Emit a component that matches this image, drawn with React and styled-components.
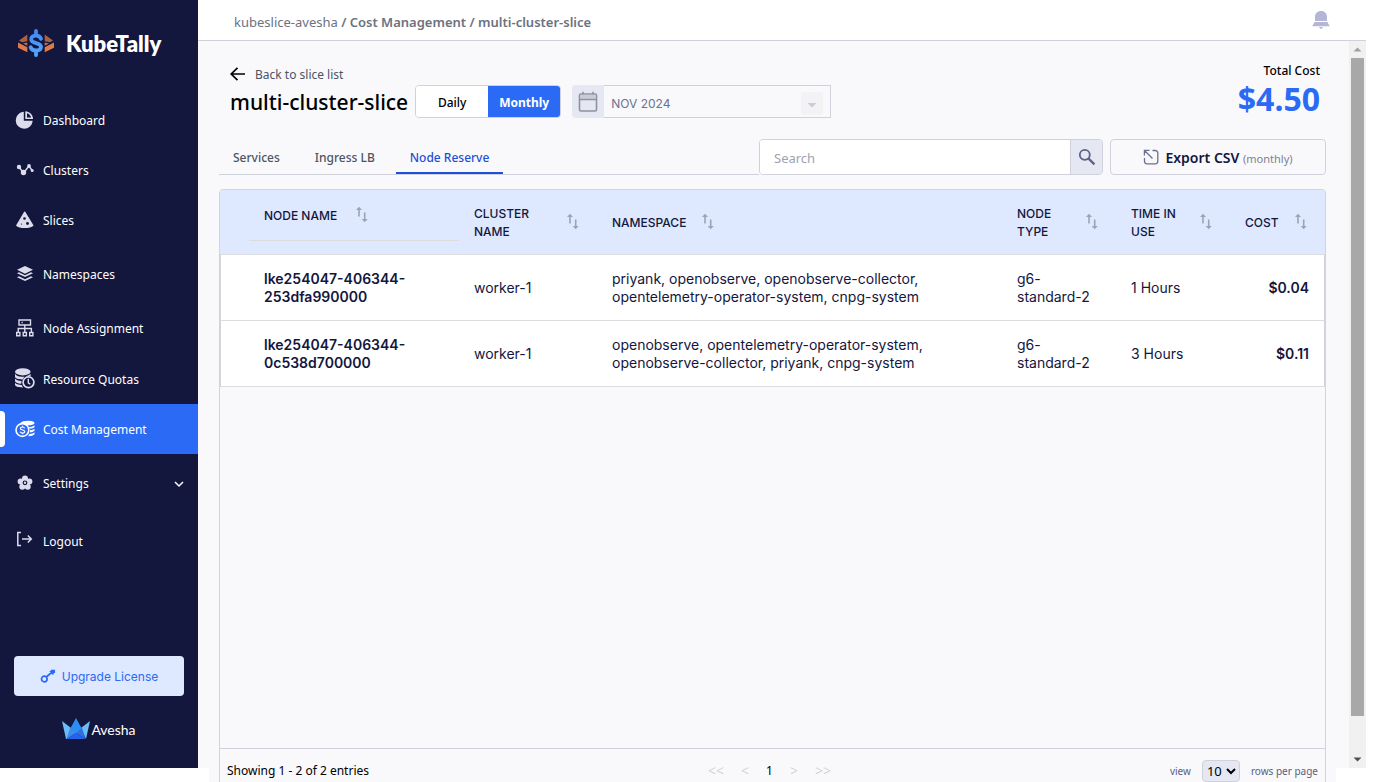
import React, { useState } from 'react';
import styled, { createGlobalStyle } from 'styled-components';

const GlobalStyle = createGlobalStyle`
    * {
        box-sizing: border-box;
    }

    html, body, #root {
        height: 100%;
    }

    body {
        margin: 0;
        overflow: hidden;
        background-color: #fff;
        font-family: 'Noto Sans', 'Open Sans', sans-serif;
        font-size: 12px;
        color: #000;
    }

    button, input, select {
        font-family: inherit;
        margin: 0;
    }

    svg {
        display: block;
        flex-shrink: 0;
    }
`;

const Shell = styled.div`
    display: flex;
    height: calc(100vh - 14px);
    margin-right: 9px;
`;

const Sidebar = styled.aside`
    display: flex;
    flex-direction: column;
    width: 198px;
    flex-shrink: 0;
    background-color: #13163d;
    color: #fff;
`;

const Brand = styled.div`
    display: flex;
    align-items: center;
    gap: 11px;
    height: 95px;
    padding: 0 0 9px 17px;
    font-family: Lato, sans-serif;
    font-size: 22px;
    font-weight: 800;
`;

const NavList = styled.nav`
    display: flex;
    flex-direction: column;
    flex: 1;
`;

const NavItem = styled.a`
    position: relative;
    display: flex;
    align-items: center;
    gap: 8px;
    padding: ${(p) => (p.$tall ? '19px' : '15px')} 14px ${(p) => (p.$tall ? '19px' : '15px')} 15px;
    line-height: 18px;
    color: #fff;
    text-decoration: none;
    background-color: ${(p) => (p.$active ? '#2a6af5' : 'transparent')};

    .label {
        flex: 1;
        padding-top: 2px;
    }

    &::before {
        content: '';
        display: ${(p) => (p.$active ? 'block' : 'none')};
        position: absolute;
        left: 0;
        top: 7px;
        bottom: 7px;
        width: 5px;
        border-radius: 0 4px 4px 0;
        background-color: #fff;
    }
`;

const UpgradeButton = styled.button`
    display: flex;
    align-items: center;
    justify-content: center;
    gap: 6px;
    height: 40px;
    margin: 0 14px;
    border: none;
    border-radius: 4px;
    background-color: #dee8ff;
    color: #2a6af5;
    font-family: Inter, sans-serif;
    font-size: 12px;
    cursor: pointer;
`;

const Company = styled.div`
    display: flex;
    align-items: center;
    justify-content: center;
    height: 72px;
    padding-bottom: 6px;
    font-family: Lato, sans-serif;
    font-size: 14px;
`;

const Main = styled.main`
    display: flex;
    flex-direction: column;
    flex: 1;
    min-width: 0;
`;

const TopBar = styled.header`
    display: flex;
    align-items: center;
    justify-content: space-between;
    height: 41px;
    flex-shrink: 0;
    padding: 0 36px;
    border-bottom: 1px solid #d1d1db;
    background-color: #fff;
`;

const Breadcrumb = styled.nav`
    padding-top: 4px;
    font-size: 13px;
    font-weight: 600;
    color: #6b7280;

    a {
        color: inherit;
        text-decoration: none;
    }

    a:first-child {
        font-weight: 400;
    }
`;

const IconButton = styled.button`
    display: flex;
    padding: 0;
    border: none;
    background: none;
    cursor: pointer;
`;

const Body = styled.div`
    display: flex;
    flex: 1;
    min-height: 0;
    background-color: #f9f9fb;
`;

const Content = styled.div`
    display: flex;
    flex-direction: column;
    flex: 1;
    min-width: 0;
    height: calc(100% + 25px);
    margin: 0 13px 0 11px;
    padding: 0 10px;
    background-color: #f9f9fb;
`;

const ScrollTrack = styled.div`
    display: flex;
    flex-direction: column;
    align-items: center;
    width: 17px;
    background-color: #f1f1f1;

    svg {
        height: 17px;
    }

    .rail {
        flex: 1;
    }

    .thumb {
        width: 13px;
        height: 95%;
        background-color: #a8a8a8;
    }
`;

const PageHeader = styled.div`
    display: flex;
    justify-content: space-between;
    align-items: flex-end;
    height: 77px;
    padding: 0 6px 0 11px;
`;

const TitleRow = styled.div`
    display: flex;
    align-items: flex-end;
    gap: 7px;

    h1 {
        margin: 0;
        font-size: 21px;
        line-height: 32px;
        font-weight: 500;
    }
`;

const Filters = styled.div`
    display: flex;
    gap: 11px;
`;

const BackLink = styled.a`
    display: flex;
    align-items: center;
    gap: 10px;
    height: 24px;
    color: #4b5563;
    font-size: 12px;
    text-decoration: none;
`;

const Toggle = styled.div`
    display: flex;
    height: 33px;
    border: 1px solid #d1d1db;
    border-radius: 4px;
    overflow: hidden;
`;

const ToggleButton = styled.button`
    width: 72px;
    padding: 2px 0 0;
    border: none;
    font-size: 12px;
    font-weight: ${(p) => (p.$active ? 700 : 500)};
    color: ${(p) => (p.$active ? '#fff' : '#000')};
    background-color: ${(p) => (p.$active ? '#2a6af5' : '#fff')};
    cursor: pointer;
`;

const DatePicker = styled.div`
    position: relative;
    display: flex;
    height: 33px;

    .calendar {
        display: flex;
        align-items: center;
        justify-content: center;
        width: 32px;
        border-radius: 4px 0 0 4px;
        background-color: #e5e7f3;
    }

    select {
        width: 227px;
        padding: 4px 7px 0;
        border: 1px solid #d1d1db;
        border-left: none;
        border-radius: 0;
        background-color: #f9f9fb;
        color: #6b7194;
        font-family: Inter, sans-serif;
        font-size: 12px;
        appearance: none;
    }

    .arrow {
        position: absolute;
        right: 8px;
        top: 7px;
        border-radius: 3px;
        background-color: #f3f3f6;
        pointer-events: none;
    }
`;

const Total = styled.div`
    display: flex;
    flex-direction: column;
    align-items: flex-end;
    font-size: 12px;
    font-weight: 500;
    line-height: 18px;

    strong {
        font-size: 32px;
        line-height: 38px;
        font-weight: 700;
        color: #2a6af5;
    }
`;

const Toolbar = styled.div`
    display: flex;
    height: 36px;
    margin: 21px 0 14px;
`;

const Tabs = styled.div`
    display: flex;
    flex: 1;
    gap: 7px;
    border-bottom: 1px solid #d1d1db;
`;

const Tab = styled.button`
    padding: 4px 14px 0;
    border: none;
    border-bottom: 2px solid ${(p) => (p.$active ? '#1d4fd8' : 'transparent')};
    background: none;
    font-size: 12px;
    font-weight: 500;
    color: ${(p) => (p.$active ? '#1d4fd8' : '#4b5563')};
    cursor: pointer;
`;

const SearchBox = styled.form`
    display: flex;
    width: 344px;
    margin-right: 7px;
    border: 1px solid #d1d1db;
    border-radius: 4px;
    overflow: hidden;

    input {
        flex: 1;
        min-width: 0;
        padding: 2px 14px 0;
        border: none;
        outline: none;
        font-size: 13px;
    }

    input::placeholder {
        color: #9ca3af;
    }

    button {
        display: flex;
        align-items: center;
        justify-content: center;
        width: 32px;
        padding: 0;
        border: none;
        border-left: 1px solid #d1d1db;
        background-color: #e5e7f3;
    }
`;

const ExportButton = styled.button`
    display: flex;
    align-items: center;
    justify-content: center;
    gap: 6px;
    width: 216px;
    border: 1px solid #d1d1db;
    border-radius: 4px;
    background-color: #f9f9fb;
    color: #13163d;
    font-size: 14px;
    font-weight: 600;
    cursor: pointer;

    small {
        font-size: 11px;
        font-weight: 400;
        color: #7d8093;
    }
`;

const TableCard = styled.section`
    display: flex;
    flex-direction: column;
    flex: 1;
    border: 1px solid #d1d5db;
    border-radius: 4px;
    overflow: hidden;
`;

const Table = styled.table`
    width: 100%;
    table-layout: fixed;
    border-spacing: 0;
    font-family: Inter, sans-serif;
    color: #13163d;
    line-height: 18px;

    th, td {
        padding: 0 15px;
        border-bottom: 1px solid #dcdcdf;
        text-align: left;
    }

    th {
        height: 65px;
        background-color: #dee8ff;
        font-size: 12px;
        font-weight: 500;
    }

    th.name {
        padding: 0;
        vertical-align: top;
    }

    td {
        height: 66px;
        background-color: #fff;
        font-size: 14px;
        font-weight: 400;
    }

    td:first-child {
        border-left: 1px solid #d1d5db;
    }

    td:last-child {
        border-right: 1px solid #d1d5db;
        text-align: right;
    }

    td.strong {
        font-weight: 600;
    }
`;

const HeadCell = styled.div`
    display: flex;
    align-items: center;
    gap: 13px;

    span {
        padding-top: 2px;
    }
`;

const NameHead = styled(HeadCell)`
    height: 51px;
    padding: 0 15px;
    gap: 16px;
    border-bottom: 1px solid #dcdcdf;
`;

const Footer = styled.footer`
    display: flex;
    align-items: center;
    justify-content: space-between;
    height: 44px;
    margin-top: auto;
    padding: 0 7px;
    border-top: 1px solid #d1d1db;
    font-size: 12px;
`;

const Pager = styled.div`
    display: flex;
    align-items: center;
    gap: 17px;

    button {
        padding: 0;
        border: none;
        background: none;
        font-size: 12px;
        color: #000;
    }

    button:disabled {
        font-size: 14px;
        font-weight: 300;
        color: #c5c9d0;
    }
`;

const PageSize = styled.label`
    display: flex;
    align-items: center;
    gap: 11px;
    font-size: 10px;
    color: #5a5f82;

    .select {
        position: relative;
    }

    select {
        width: 38px;
        height: 22px;
        padding: 0 4px;
        border: 1px solid #d1d1db;
        border-radius: 4px;
        background-color: #e5e7f3;
        font-size: 13px;
        appearance: none;
    }

    svg {
        position: absolute;
        right: 4px;
        top: 5px;
        pointer-events: none;
    }
`;

const light = '#dcdcec';

const KubeTallyLogo = () => (
  <svg width="38" height="30" viewBox="0 0 38 30">
    <defs>
      <linearGradient id="dollar" gradientUnits="userSpaceOnUse" x1="0" y1="1" x2="0" y2="29">
        <stop offset="0" stopColor="#3f85f5" />
        <stop offset="1" stopColor="#55aaff" />
      </linearGradient>
    </defs>
    <path d="M10.300 6.500v6.800L5 14.200 2 12.600z M27.700 6.500v6.800l5.300.9 3-1.600z" fill="#a9613f" />
    <path d="M10.300 14.500v3.300L6 15.400z M27.700 14.500v3.300l4.300-2.400z" fill="#c96d45" />
    <path d="M1 14.500l9.300 4.800v5L1 19.800z M37 14.500l-9.300 4.800v5l9.300-4.500z" fill="#e0794a" />
    <path
      d="M24 10.800c-.8-2.100-2.600-3.200-5-3.200-2.900 0-4.800 1.400-4.800 3.600 0 5.300 9.800 2.500 9.800 7.600 0 2.300-2 3.700-5 3.700-2.600 0-4.600-1.200-5.400-3.300M19 3v4.500M19 22.500V27"
      fill="none"
      stroke="url(#dollar)"
      strokeWidth="3.800"
      strokeLinecap="round"
    />
  </svg>
);

const DashboardIcon = () => (
  <svg width="20" height="20" viewBox="0 0 20 20" fill={light}>
    <path d="M8.800 1.800a8.500 8.500 0 1 0 8.900 9H8.800z" />
    <path d="M10.300 1.200c4.300.2 7.600 3.500 7.800 7.900h-7.800zM12 3.200v4.200h4.100C15.500 5.300 14 3.800 12 3.200z" fillRule="evenodd" />
  </svg>
);

const ClustersIcon = () => (
  <svg width="20" height="20" viewBox="0 0 20 20" fill={light}>
    <path d="M4 7l4.500 6L14 6l3.500 5" stroke={light} strokeWidth="1.400" fill="none" />
    <circle cx="4" cy="7" r="2.200" />
    <circle cx="8.500" cy="12.500" r="2.700" />
    <circle cx="14" cy="6" r="1.900" />
    <circle cx="17.200" cy="10.500" r="1.500" />
  </svg>
);

const SlicesIcon = () => (
  <svg width="20" height="20" viewBox="0 0 20 20">
    <path d="M9.700 1.500c.4 0 .7.400 1 .9l7.900 13c-1.700 2-5.200 2.600-8.900 2.600s-7.200-.6-8.700-2.600l7.700-13c.3-.5.600-.9 1-.9z" fill={light} />
    <circle cx="9.500" cy="8.500" r="1.300" fill="#13163d" />
    <circle cx="12.500" cy="13.500" r="1.400" fill="#13163d" />
    <circle cx="6.500" cy="14" r=".6" fill="#13163d" />
  </svg>
);

const NamespacesIcon = () => (
  <svg width="20" height="20" viewBox="0 0 20 20" fill={light}>
    <path d="M10 2l8 3.800-8 3.900-8-3.900z" />
    <path d="M2 9.200l2-.9 6 2.900 6-2.900 2 .9-8 3.900z" />
    <path d="M2 13.200l2-.9 6 2.900 6-2.900 2 .9-8 3.900z" />
  </svg>
);

const NodeIcon = () => (
  <svg width="20" height="20" viewBox="0 0 20 20" fill="none" stroke={light} strokeWidth="1.400">
    <path d="M4 2h11.500v5H4zM9.800 7v7M3.200 14v-3.500h13.200V14M1.700 14.500h3.200v3.200H1.700zM8.200 14.500h3.200v3.200H8.200zM14.700 14.500h3.200v3.200h-3.200zM6.500 4.500h1.300" />
  </svg>
);

const QuotaIcon = () => (
  <svg width="20" height="21" viewBox="0 0 20 21">
    <ellipse cx="7.800" cy="3.800" rx="7.800" ry="3.600" fill={light} />
    <path d="M0 5.800c1 2 3.500 3 7 3h2.500l-2 2.600C3.500 11.500 0 10.500 0 8.500zM0 10.600c1 1.500 3.200 2.400 6.500 2.500l-.2 2.700C2.500 15.500 0 14.500 0 12.700zM0 14.800c1 1.300 3.500 2.200 6.600 2.300l1.400 2.300C3.500 19.500 0 18.500 0 16.800z" fill={light} />
    <path d="M10.500 8.300c2.500-.4 4.500-1.300 5.100-2.500v2.500z" fill={light} />
    <circle cx="13.500" cy="14.300" r="5.400" fill="#13163d" stroke={light} strokeWidth="1.700" />
    <path d="M13.300 10.800v4l2 1.400" fill="none" stroke={light} strokeWidth="1.400" />
  </svg>
);

const CostIcon = () => (
  <svg width="20" height="20" viewBox="0 0 20 20">
    <path d="M5.500 3.800C6.500 2.500 9.500 1.800 13 1.800s6.500.9 6.500 2.200-3 2.400-6.200 2.400c-2 0-3-1.800-7.800-2.600z" fill="#fff" />
    <path d="M14 8c2.300 0 4.400-.6 5.500-1.800v1.900c-.8 1-2.700 1.600-4.900 1.700zM15 11.300c2-.1 3.600-.6 4.500-1.500v1.900c-.7.900-2.400 1.500-4.600 1.600zM14.400 15c2.200-.1 4.100-.7 5.100-1.700v1.900c-1 1.200-3.500 2-6.300 2z" fill="#fff" />
    <circle cx="7.400" cy="11" r="6.400" fill="#2a6af5" stroke="#fff" strokeWidth="1.600" />
    <path d="M9.700 9.300C9.300 8.400 8.500 8 7.500 8c-1.200 0-2.100.6-2.100 1.500 0 2.100 4.300.9 4.300 3 0 .9-.9 1.500-2.200 1.500-1.100 0-2-.4-2.300-1.300M7.500 6.800V8M7.500 14v1.300" fill="none" stroke="#fff" strokeWidth="1.200" />
  </svg>
);

const SettingsIcon = () => (
  <svg width="20" height="20" viewBox="0 0 20 20">
    <g fill={light}>
      <circle cx="10" cy="5.400" r="3" />
      <circle cx="14.400" cy="8.500" r="3" />
      <circle cx="12.700" cy="13.700" r="3" />
      <circle cx="7.300" cy="13.700" r="3" />
      <circle cx="5.600" cy="8.500" r="3" />
      <circle cx="10" cy="10" r="4.500" />
    </g>
    <circle cx="10" cy="9.800" r="1.800" fill={light} stroke="#13163d" strokeWidth="1.200" />
  </svg>
);

const LogoutIcon = () => (
  <svg width="20" height="20" viewBox="0 0 20 20" fill="none" stroke={light} strokeWidth="1.500">
    <path d="M6 1.500H2.800v13H6M7 8h9M12.800 4.500L16.300 8l-3.500 3.500" />
  </svg>
);

const ChevronDown = ({ size = 10, color = '#fff', width = 1.5 }) => (
  <svg width={size} height={size} viewBox="0 0 10 10" fill="none" stroke={color} strokeWidth={width}>
    <path d="M1 4l4 4 4-4" />
  </svg>
);

const KeyIcon = () => (
  <svg width="16" height="16" viewBox="0 0 16 16" fill="none" stroke="#2a6af5" strokeWidth="1.700">
    <circle cx="4.300" cy="11" r="2.800" />
    <path d="M6.300 9l7-6M10 3l3.500 3.500M11 2.500h3.200v2.500" />
  </svg>
);

const AveshaLogo = () => (
  <svg width="29" height="22" viewBox="0 0 29 22">
    <path d="M0 3l9 7-4 11H4z" fill="#6cbcfa" />
    <path d="M28 3l-9 7 5 11z" fill="#6cbcfa" />
    <path d="M14 0l6 11-6 5-6-5z" fill="#2b8df5" />
    <path d="M8 10l6 5-9.500 6z" fill="#3f8bea" />
    <path d="M20 10l-6 5 9.500 6z" fill="#2f6fe0" />
    <path d="M14 15l9.500 6h-19z" fill="#2563eb" />
  </svg>
);

const BellIcon = () => (
  <svg width="18" height="18" viewBox="0 0 18 18" fill="#b5b5d8">
    <path d="M9 0c3.800 0 6 2.600 6 6v4H3V6c0-3.400 2.200-6 6-6zM2.700 11h12.600l2.500 4.200H.2zM6.800 16h4.400L9 18.200z" />
  </svg>
);

const BackIcon = () => (
  <svg width="15" height="14" viewBox="0 0 15 14" fill="none" stroke="#000" strokeWidth="1.700">
    <path d="M15 7H1.500M7.500 .8L1.200 7l6.300 6.200" />
  </svg>
);

const CalendarIcon = () => (
  <svg width="20" height="22" viewBox="0 0 20 22" fill="none" stroke="#8f919e" strokeWidth="1.600">
    <rect x="1.500" y="3" width="17" height="17" rx="1.500" />
    <path d="M2.300 3.800h15.400v4H2.300z" fill="#c9cbd8" stroke="none" />
    <path d="M1.500 8.500h17M5 .8v2.500M15 .8v2.500" />
  </svg>
);

const CaretIcon = () => (
  <svg className="arrow" width="22" height="23" viewBox="0 0 22 23">
    <path d="M6.500 11h9L11 15.500z" fill="#cacbd6" />
  </svg>
);

const SearchIcon = () => (
  <svg width="18" height="18" viewBox="0 0 18 18" fill="none" stroke="#5d6285">
    <circle cx="6.800" cy="6.800" r="5" strokeWidth="1.800" />
    <path d="M10.600 10.600l5.800 5.800" strokeWidth="2.200" />
  </svg>
);

const ExportIcon = () => (
  <svg width="16" height="16" viewBox="0 0 16 16" fill="none" stroke="#6d7190" strokeWidth="1.300">
    <path d="M1.500 9v3.300a2.500 2.500 0 0 0 2.500 2.500h8.300a2.500 2.500 0 0 0 2.500-2.500V4a2.500 2.500 0 0 0-2.500-2.500H9.500M9.500 9.500L1.500 1.500M1.400 6.500V1.400H6.500" />
  </svg>
);

const SortIcon = () => (
  <svg width="18" height="18" viewBox="0 0 18 18" fill="#9ca3b4">
    <path d="M5.200 10.500V4H3l3-3.200L9 4H6.800v6.500zM10.900 6.500V13H8.700l3 3.200 3-3.200h-2.200V6.500z" />
  </svg>
);

const navItems = [
  { label: 'Dashboard', icon: <DashboardIcon /> },
  { label: 'Clusters', icon: <ClustersIcon /> },
  { label: 'Slices', icon: <SlicesIcon /> },
  { label: 'Namespaces', icon: <NamespacesIcon />, tall: true },
  { label: 'Node Assignment', icon: <NodeIcon /> },
  { label: 'Resource Quotas', icon: <QuotaIcon /> },
  { label: 'Cost Management', icon: <CostIcon />, active: true },
  { label: 'Settings', icon: <SettingsIcon />, tall: true, expandable: true },
  { label: 'Logout', icon: <LogoutIcon />, tall: true },
];

const columns = ['CLUSTER NAME', 'NAMESPACE', 'NODE TYPE', 'TIME IN USE', 'COST'];

const rows = [
  {
    node: 'lke254047-406344-253dfa990000',
    cluster: 'worker-1',
    namespace: 'priyank, openobserve, openobserve-collector, opentelemetry-operator-system, cnpg-system',
    type: 'g6-standard-2',
    time: '1 Hours',
    cost: '$0.04',
  },
  {
    node: 'lke254047-406344-0c538d700000',
    cluster: 'worker-1',
    namespace: 'openobserve, opentelemetry-operator-system, openobserve-collector, priyank, cnpg-system',
    type: 'g6-standard-2',
    time: '3 Hours',
    cost: '$0.11',
  },
];

const App = () => {
  const [period, setPeriod] = useState('Monthly');
  const [tab, setTab] = useState('Node Reserve');
  const [search, setSearch] = useState('');

  const visibleRows = rows.filter((row) => row.node.includes(search));

  return (
    <>
      <GlobalStyle />
      <Shell>
        <Sidebar>
          <Brand>
            <KubeTallyLogo />
            KubeTally
          </Brand>
          <NavList>
            {navItems.map((item) => (
              <NavItem key={item.label} href="#" $active={item.active} $tall={item.tall}>
                {item.icon}
                <span className="label">{item.label}</span>
                {item.expandable && <ChevronDown />}
              </NavItem>
            ))}
          </NavList>
          <UpgradeButton type="button">
            <KeyIcon />
            Upgrade License
          </UpgradeButton>
          <Company>
            <AveshaLogo />
            Avesha
          </Company>
        </Sidebar>
        <Main>
          <TopBar>
            <Breadcrumb>
              <a href="#">kubeslice-avesha</a> / <a href="#">Cost Management</a> / <span>multi-cluster-slice</span>
            </Breadcrumb>
            <IconButton type="button" aria-label="Notifications">
              <BellIcon />
            </IconButton>
          </TopBar>
          <Body>
            <Content>
              <PageHeader>
                <TitleRow>
                  <div>
                    <BackLink href="#">
                      <BackIcon />
                      Back to slice list
                    </BackLink>
                    <h1>multi-cluster-slice</h1>
                  </div>
                  <Filters>
                    <Toggle>
                      {['Daily', 'Monthly'].map((name) => (
                        <ToggleButton key={name} type="button" $active={period === name} onClick={() => setPeriod(name)}>
                          {name}
                        </ToggleButton>
                      ))}
                    </Toggle>
                    <DatePicker>
                      <label className="calendar" htmlFor="month_field" aria-label="Month">
                        <CalendarIcon />
                      </label>
                      <select id="month_field" defaultValue="NOV 2024">
                        <option>NOV 2024</option>
                      </select>
                      <CaretIcon />
                    </DatePicker>
                  </Filters>
                </TitleRow>
                <Total>
                  Total Cost
                  <strong>$4.50</strong>
                </Total>
              </PageHeader>
              <Toolbar>
                <Tabs>
                  {['Services', 'Ingress LB', 'Node Reserve'].map((name) => (
                    <Tab key={name} type="button" $active={tab === name} onClick={() => setTab(name)}>
                      {name}
                    </Tab>
                  ))}
                </Tabs>
                <SearchBox onSubmit={(e) => e.preventDefault()}>
                  <input
                    type="text"
                    aria-label="Search"
                    placeholder="Search"
                    value={search}
                    onChange={(e) => setSearch(e.target.value)}
                  />
                  <button type="submit" aria-label="Submit search">
                    <SearchIcon />
                  </button>
                </SearchBox>
                <ExportButton type="button">
                  <ExportIcon />
                  <span>
                    Export CSV <small>(monthly)</small>
                  </span>
                </ExportButton>
              </Toolbar>
              <TableCard>
                <Table>
                  <colgroup>
                    <col width="29" />
                    <col width="210" />
                    <col width="138" />
                    <col />
                    <col width="114" />
                    <col width="114" />
                    <col width="95" />
                  </colgroup>
                  <thead>
                    <tr>
                      <th />
                      <th className="name">
                        <NameHead>
                          <span>NODE NAME</span>
                          <SortIcon />
                        </NameHead>
                      </th>
                      {columns.map((name) => (
                        <th key={name}>
                          <HeadCell>
                            <span>{name}</span>
                            <SortIcon />
                          </HeadCell>
                        </th>
                      ))}
                    </tr>
                  </thead>
                  <tbody>
                    {visibleRows.map((row) => (
                      <tr key={row.node}>
                        <td />
                        <td className="strong">{row.node}</td>
                        <td>{row.cluster}</td>
                        <td>{row.namespace}</td>
                        <td>{row.type}</td>
                        <td>{row.time}</td>
                        <td className="strong">{row.cost}</td>
                      </tr>
                    ))}
                  </tbody>
                </Table>
                <Footer>
                  <span>Showing 1 - 2 of 2 entries</span>
                  <Pager>
                    <button type="button" disabled>&lt;&lt;</button>
                    <button type="button" disabled>&lt;</button>
                    <button type="button">1</button>
                    <button type="button" disabled>&gt;</button>
                    <button type="button" disabled>&gt;&gt;</button>
                  </Pager>
                  <PageSize>
                    view
                    <span className="select">
                      <select defaultValue="10">
                        <option>10</option>
                        <option>20</option>
                      </select>
                      <ChevronDown color="#000" width={2} />
                    </span>
                    rows per page
                  </PageSize>
                </Footer>
              </TableCard>
            </Content>
            <ScrollTrack>
              <svg width="17" viewBox="0 0 17 17">
                <path d="M4.500 10.500h8l-4-4z" fill="#a0a0a0" />
              </svg>
              <div className="rail">
                <div className="thumb" />
              </div>
              <svg width="17" viewBox="0 0 17 17">
                <path d="M4.500 6.500h8l-4 4z" fill="#505050" />
              </svg>
            </ScrollTrack>
          </Body>
        </Main>
      </Shell>
    </>
  );
};

export default App;
